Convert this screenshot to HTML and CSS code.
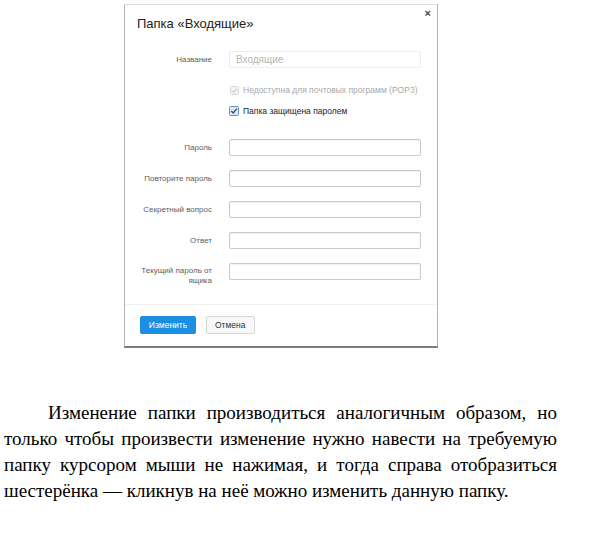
FILE: index.html
```html
<!DOCTYPE html>
<html lang="ru">
<head>
<meta charset="utf-8">
<link rel="stylesheet" href="styles.css">
</head>
<body>
<div class="page">
  <div class="dialog">
    <span class="close">&#215;</span>
    <div class="title">Папка «Входящие»</div>
    <div class="form">
      <div class="row">
        <span class="label">Название</span>
        <div class="input disabled">Входящие</div>
      </div>
      <div class="checks">
        <div class="check muted">
          <svg class="box" width="9" height="9" viewBox="0 0 9 9"><rect x="0.5" y="0.5" width="8" height="8" rx="1" fill="#f4f4f4" stroke="#d8d8d8"/><path d="M2 4.6 L3.8 6.3 L7 2.6" fill="none" stroke="#cfcfcf" stroke-width="1.3"/></svg>
          <span>Недоступна для почтовых программ (POP3)</span>
        </div>
        <div class="check">
          <svg class="box" width="10" height="10" viewBox="0 0 10 10"><rect x="0.5" y="0.5" width="9" height="9" rx="1" fill="#dfe9f6" stroke="#6f8fbf"/><path d="M2.2 5 L4.2 7 L7.9 2.6" fill="none" stroke="#3a4f72" stroke-width="1.4"/></svg>
          <span>Папка защищена паролем</span>
        </div>
      </div>
      <div class="row first">
        <span class="label">Пароль</span>
        <div class="input"></div>
      </div>
      <div class="row">
        <span class="label">Повторите пароль</span>
        <div class="input"></div>
      </div>
      <div class="row">
        <span class="label">Секретный вопрос</span>
        <div class="input"></div>
      </div>
      <div class="row">
        <span class="label">Ответ</span>
        <div class="input"></div>
      </div>
      <div class="row top">
        <span class="label">Текущий пароль от ящика</span>
        <div class="input"></div>
      </div>
    </div>
    <div class="footer">
      <span class="btn primary">Изменить</span>
      <span class="btn">Отмена</span>
    </div>
  </div>
  <p class="text">Изменение папки производиться аналогичным образом, но только чтобы произвести изменение нужно навести на требуемую папку курсором мыши не нажимая, и тогда справа отобразиться шестерёнка — кликнув на неё можно изменить данную папку.</p>
</div>
</body>
</html>
```
FILE: styles.css
```css
html, body {
  margin: 0;
  padding: 0;
  background: #ffffff;
}

.page {
  width: 600px;
  height: 545px;
  overflow: hidden;
}

.dialog {
  position: relative;
  box-sizing: border-box;
  width: 314px;
  height: 344px;
  margin: 4px 0 0 124px;
  border: 1px solid #b4b4b4;
  border-top-color: #dcdcdc;
  border-bottom: 2px solid #7c7c7c;
  background: #fff;
  font-family: "Liberation Sans", Arial, sans-serif;
  display: flex;
  flex-direction: column;
}

.close {
  position: absolute;
  top: 2px;
  right: 6px;
  font-size: 11px;
  font-weight: bold;
  line-height: 12px;
  color: #444;
}

.title {
  margin: 11px 0 0 12px;
  font-size: 13px;
  line-height: 16px;
  color: #222;
}

.form {
  margin-top: 19px;
  padding-left: 12px;
  display: flex;
  flex-direction: column;
}

.row {
  display: grid;
  grid-template-columns: 75px 192px;
  column-gap: 17px;
  align-items: center;
}

.row + .row {
  margin-top: 14px;
}

.row.first {
  margin-top: 0;
}

.row.top {
  align-items: start;
}

.row.top .label {
  padding-top: 3px;
}

.label {
  text-align: right;
  font-size: 8px;
  line-height: 10px;
  color: #5e5e5e;
}

.input {
  box-sizing: border-box;
  height: 17px;
  border: 1px solid #c9c9c9;
  border-radius: 2px;
  box-shadow: inset 0 1px 1px rgba(0,0,0,0.06);
  background: #fff;
  padding: 0 6px;
  font-size: 10px;
  line-height: 15px;
  color: #b5b5b5;
}

.input.disabled {
  border-color: #ececec;
  box-shadow: none;
}

.checks {
  margin: 16px 0 22px 92px;
  display: flex;
  flex-direction: column;
  gap: 9px;
}

.check {
  display: flex;
  align-items: center;
  gap: 4px;
  font-size: 8.5px;
  line-height: 12px;
  color: #222;
}

.check.muted {
  color: #a8a8a8;
  padding-left: 1px;
}

.check .box {
  display: block;
  flex: none;
}

.footer {
  margin-top: auto;
  border-top: 1px solid #f1f1f1;
  padding: 11px 0 12px 15px;
  display: flex;
  gap: 10px;
}

.btn {
  box-sizing: border-box;
  height: 18px;
  padding: 0 8px;
  border: 1px solid #d6d6d6;
  border-radius: 2px;
  background: #f8f8f8;
  font-size: 8.5px;
  line-height: 16px;
  color: #333;
}

.btn.primary {
  width: 56px;
  text-align: center;
  padding: 0;
  border-color: #1b8ddf;
  background: #1a8fe3;
  color: #fff;
}

.text {
  margin: 52px 43px 0 4px;
  font-family: "Liberation Serif", "Times New Roman", serif;
  font-size: 19px;
  line-height: 26px;
  text-align: justify;
  text-indent: 44px;
  color: #000;
}
```
